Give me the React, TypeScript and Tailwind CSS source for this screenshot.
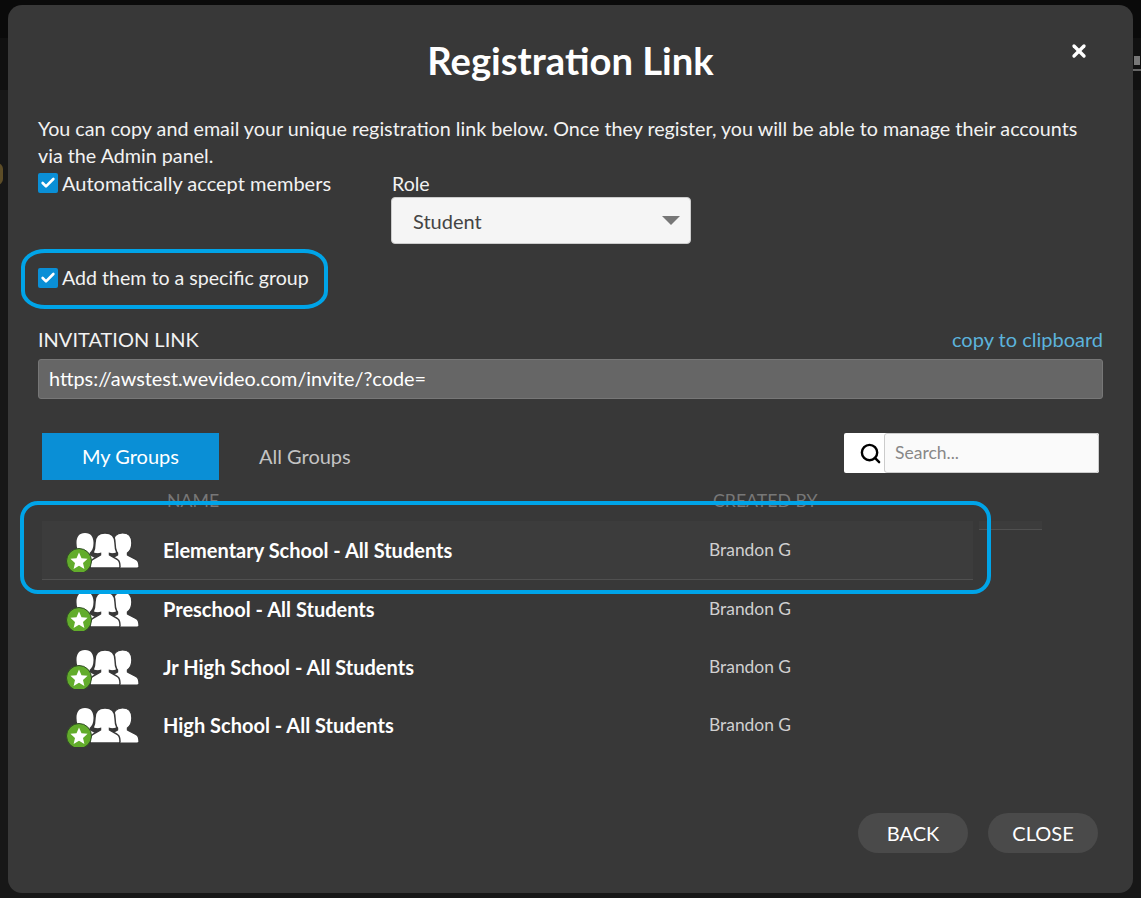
import { Check, Search, X } from 'lucide-react';

const groups = [
  { name: 'Elementary School - All Students', by: 'Brandon G', active: true },
  { name: 'Preschool - All Students', by: 'Brandon G', active: false },
  { name: 'Jr High School - All Students', by: 'Brandon G', active: false },
  { name: 'High School - All Students', by: 'Brandon G', active: false },
];

const person = 'M15 0C9 0 6.5 4 6.5 10C6.5 15 8 18 10.5 20L10.5 22C8 24 4 25 2 27C0 28.5 0 31 0 34C0 35 1 35 2 35L28 35C29 35 30 35 30 34C30 31 30 28.5 28 27C26 25 22 24 19.5 22L19.5 20C22 18 23.5 15 23.5 10C23.5 4 21 0 15 0Z';
// middle figure has longer hair than the other two
const personHair = 'M15 0C8 0 5 4 5 10C5 15 4 18 3 20C6 21 9 21 10.5 20.5L10.5 22C8 24 4 25 2 27C0 28.5 0 31 0 34C0 35 1 35 2 35L28 35C29 35 30 35 30 34C30 31 30 28.5 28 27C26 25 22 24 19.5 22L19.5 20.5C21 21 24 21 27 20C26 18 25 15 25 10C25 4 22 0 15 0Z';

const GroupIcon = () => (
  <svg width="80" height="46" viewBox="0 0 80 46" className="block shrink-0">
    <path d={person} fill="#fff" transform="translate(8 7)" />
    <path d={person} fill="#fff" stroke="#383838" strokeWidth="1.2" transform="translate(44 7) scale(1.1 1)" />
    <path d={personHair} fill="#fff" stroke="#383838" strokeWidth="1.5" transform="translate(28 7)" />
    <circle cx="17" cy="35" r="12.5" fill="#62ac2b" stroke="#2f4a25" strokeWidth="1" />
    <path d="M17 26.5L19.5 32.2L25.6 32.8L21 36.9L22.4 43L17 39.8L11.6 43L13 36.9L8.4 32.8L14.5 32.2Z" fill="#fff" />
  </svg>
);

const Box = ({ label, size }: { label: string; size: string }) => (
  <label className="flex items-center gap-1">
    <span className="w-5 h-5 rounded-[2px] bg-[#0a8fd6] flex items-center justify-center">
      <Check className="w-4 h-4 text-white" strokeWidth={4} />
    </span>
    <span className={`${size} leading-5 text-[#f2f2f2]`}>{label}</span>
  </label>
);

export default function App() {
  return (
    <div className="relative w-[1141px] h-[898px] overflow-hidden bg-[#171717] font-['Lato',sans-serif]">
      <div className="absolute top-0 left-0 right-0 h-[38px] bg-[#0a0a0a]" />
      <div className="absolute top-[38px] left-0 right-0 h-[52px] bg-[#101010]" />
      <div className="absolute left-[-9px] top-[163px] w-[12px] h-[22px] rounded-full bg-[#5d4d27]" />
      <div className="absolute right-0 top-[69px] w-[8px] h-[2px] bg-[#666]" />
      <div className="absolute right-[1px] top-[56px] w-[6px] h-[9px] bg-[#777]" />

      <div className="relative mt-[5px] ml-[8px] w-[1125px] h-[888px] rounded-[14px] bg-[#383838] pt-[29px] px-[30px]">
        <h1 className="text-center text-[38.2px] leading-[52px] font-bold text-white">Registration Link</h1>
        <button className="absolute top-[36px] right-[44px] text-white">
          <X className="w-[20px] h-[20px]" strokeWidth={4} />
        </button>

        <p className="mt-[29px] pr-[20px] text-[19.73px] leading-[27px] text-[#f2f2f2]">
          You can copy and email your unique registration link below. Once they register, you will be able to manage their accounts via the Admin panel.
        </p>

        <div className="flex mt-[4px] h-[73px]">
          <div className="w-[354px]">
            <Box label="Automatically accept members" size="text-[20px]" />
          </div>
          <div>
            <div className="text-[19.6px] leading-5 text-[#f2f2f2] pt-[1px]">Role</div>
            <div className="mt-[3px] -ml-[1px] w-[300px] h-[47px] rounded-[4px] bg-[#f5f5f5] border border-[#ccc] flex items-center justify-between pl-[21px] pr-[10px] text-[20px] text-[#444]">
              <span className="pt-[1px]">Student</span>
              <span className="w-0 h-0 border-l-[9px] border-r-[9px] border-t-[9px] border-l-transparent border-r-transparent border-t-[#777]" />
            </div>
          </div>
        </div>

        <div className="mt-[22px]">
          <Box label="Add them to a specific group" size="text-[19.6px]" />
        </div>

        <div className="flex items-center justify-between mt-[41px] h-5">
          <span className="text-[20px] text-[#f2f2f2]">INVITATION LINK</span>
          <a className="text-[20px] text-[#5cb3dc]">copy to clipboard</a>
        </div>
        <div className="mt-[10px] w-[1065px] h-[40px] rounded-[3px] bg-[#666] border border-[#777] flex items-center pl-[10px] text-[19.85px] text-white">
          https://awstest.wevideo.com/invite/?code=
        </div>

        <div className="flex justify-between mt-[34px] px-[4px]">
          <div className="flex items-center h-[47px]">
            <span className="w-[177px] h-full bg-[#0a8fd6] flex items-center justify-center pb-[2px] text-[20px] text-white">My Groups</span>
            <span className="pl-[40px] pb-[2px] text-[20px] text-[#c4c4c4]">All Groups</span>
          </div>
          <div className="flex w-[255px] h-[40px] bg-white rounded-[2px]">
            <span className="w-[40px] flex items-center pl-[15px]">
              <Search className="w-[23px] h-[23px] text-black" strokeWidth={2.5} />
            </span>
            <span className="flex-1 bg-[#fafafa] border border-[#ccc] rounded-[3px] flex items-center pl-[10px] text-[17.5px] text-[#888]">Search...</span>
          </div>
        </div>

        <div className="flex items-center h-[41px] pt-[1px] text-[17.7px] text-[#777]">
          <span className="pl-[129px] w-[675px]">NAME</span>
          <span>CREATED BY</span>
        </div>

        <div className="ml-[4px] w-[931px]">
          {groups.map((g) => (
            <div
              key={g.name}
              className={`flex items-center ${g.active ? 'h-[59px] bg-[#3c3c3c] border-b border-[#505050]' : 'h-[58px]'}`}
            >
              <span className="ml-[20px] w-[101px] -mt-[2px]">
                <GroupIcon />
              </span>
              <span className="w-[546px] text-[20px] font-bold text-white">{g.name}</span>
              <span className="text-[17.4px] text-[#d0d0d0]">{g.by}</span>
            </div>
          ))}
        </div>

        <div className="absolute right-[35px] bottom-[40px] flex gap-5">
          <button className="w-[110px] h-[40px] rounded-[20px] bg-[#4a4a4a] text-[20px] text-white">BACK</button>
          <button className="w-[110px] h-[40px] rounded-[20px] bg-[#4a4a4a] text-[20px] text-white">CLOSE</button>
        </div>

        <div className="absolute left-[971px] top-[516px] w-[63px] h-[9px] bg-[#3c3c3c] border-b border-[#505050]" />
        <div className="absolute left-[13px] top-[244px] w-[307px] h-[60px] rounded-[24px/18px] border-[4px] border-[#00a4e8]" />
        <div className="absolute left-[12px] top-[496px] w-[971px] h-[93px] rounded-[18px] border-[4px] border-[#00a4e8]" />
      </div>
    </div>
  );
}
